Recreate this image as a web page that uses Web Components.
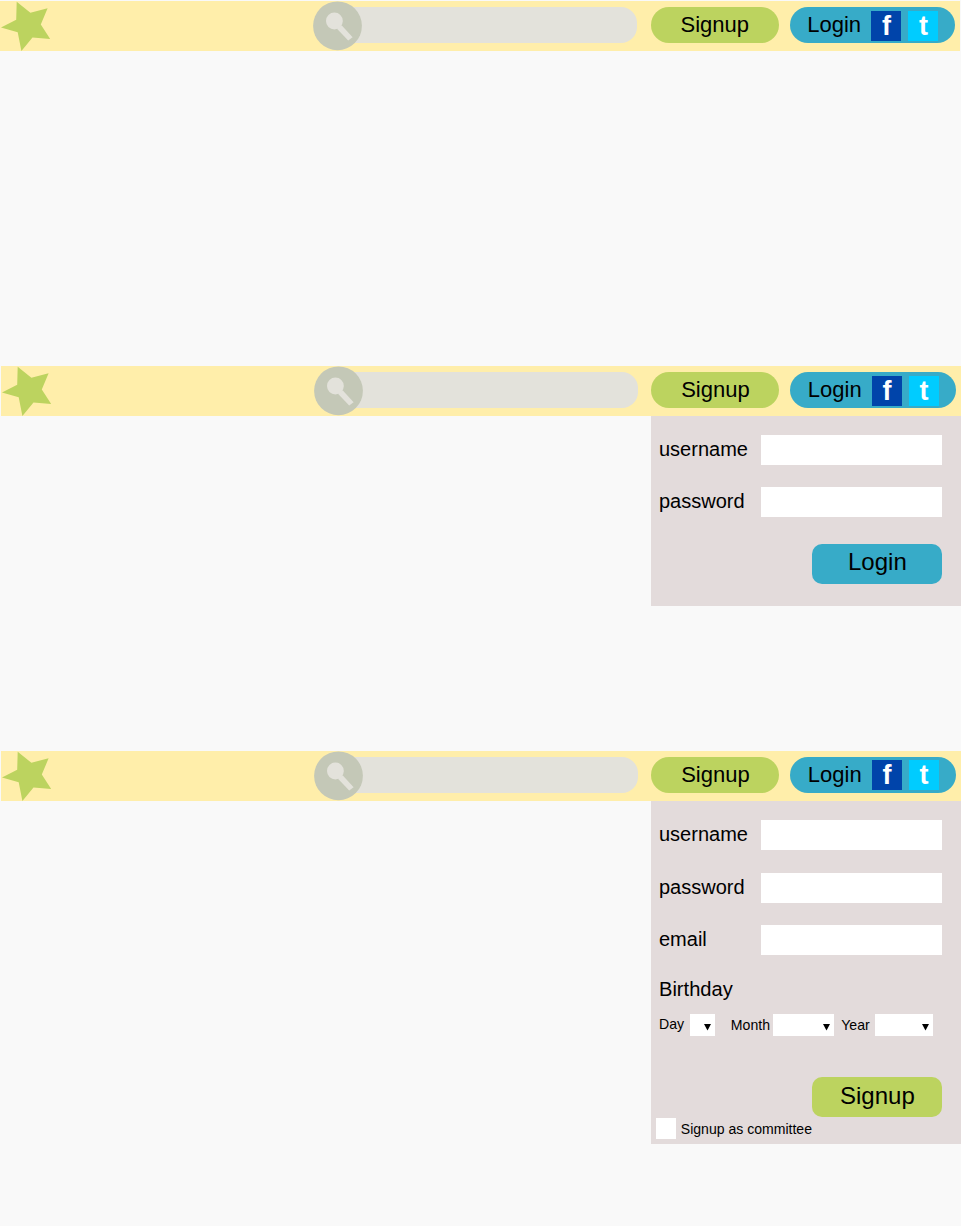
<!DOCTYPE html>
<html lang="en">
<head>
<meta charset="utf-8">
<title>Signup and login</title>
<style>
html,body{margin:0;background:#f9f9f9}
body{width:961px;height:1226px;overflow:hidden;font-family:"Liberation Sans",Arial,sans-serif;color:#000}
</style>
</head>
<body>
<auth-board></auth-board>
<script>
const define = (name, html) => {
  const t = document.createElement('template');
  t.innerHTML = html;
  customElements.define(name, class extends HTMLElement {
    constructor() {
      super();
      this.attachShadow({mode: 'open'}).append(t.content.cloneNode(true));
    }
  });
};

define('star-logo', `<style>:host{display:block;width:51px;height:50px}svg{display:block}</style>
<svg width="51" height="50" viewBox="0 0 51 50"><path fill="#bcd35f" d="M16.7 .8 30.4 11.8 47.6 7.3 40.8 23.6 50.2 38 32.5 36.6 21.4 50 17.7 31.3 1 26.5 16.2 18.7Z"/></svg>`);

define('search-box', `<style>
:host{display:flex;align-items:center;width:324px;height:50px}
svg{display:block;flex:none;position:relative}
.field{flex:1;height:36px;margin:-2px 0 0 -25px;background:#e3e2db;border-radius:0 16px 16px 0}
</style>
<svg width="49" height="50" viewBox="0 0 49 50" style="z-index:1"><circle cx="24.5" cy="24.8" r="24.4" fill="#c4c8b7"/><circle cx="21.4" cy="20" r="8.4" fill="#e3e2db"/><path fill="#e3e2db" d="M24 27.8 28.6 24.2 39.6 36.2 35.2 39.4Z"/></svg>
<div class="field"></div>`);

define('nav-pill', `<style>
:host{display:flex;box-sizing:border-box;height:36px;margin-top:-2px;border-radius:18px;font-size:22px;line-height:35px;white-space:nowrap}
</style><slot></slot>`);

define('social-badge', `<style>
:host{display:block;width:30px;height:30px;margin-top:3.5px;color:#fff;font-size:27px;font-weight:bold;line-height:31px;text-align:center}
</style><slot></slot>`);

define('top-bar', `<style>
:host{display:flex;align-items:center;width:960px;height:50px;background:#fea}
search-box{margin-left:262px}
.signup{width:128px;margin-left:13.8px;justify-content:center;background:#bcd35f}
.login{width:165.4px;margin-left:11px;padding-left:17.4px;background:#37abc8}
.f{margin-left:10.4px;background:#04a}
.t{margin-left:7px;background:#0cf}
</style>
<star-logo></star-logo><search-box></search-box>
<nav-pill class="signup">Signup</nav-pill>
<nav-pill class="login">Login<social-badge class="f">f</social-badge><social-badge class="t">t</social-badge></nav-pill>`);

define('form-row', `<style>
:host{display:flex;height:30px;margin-bottom:22.3px;font-size:20px;line-height:28px}
.label{width:102.4px}
.input{width:180.4px;height:30px;background:#fff}
</style><div class="label"><slot></slot></div><div class="input"></div>`);

define('submit-button', `<style>
:host{display:block;width:130.2px;height:40px;border-radius:10px;font-size:24px;line-height:37px;text-align:center}
</style><slot></slot>`);

define('date-select', `<style>
:host{display:flex;font-size:14.1px;line-height:22px;height:21.6px}
.box{box-sizing:border-box;width:var(--box);background:#fff;display:flex;justify-content:flex-end;padding:10.4px 3.4px 0 0}
.label{width:var(--label);margin-top:var(--drop,0px);white-space:nowrap}
svg{display:block}
</style><div class="label"><slot></slot></div><div class="box"><svg width="7" height="7" viewBox="0 0 7 7"><path d="M0 0H7L3.5 6.5Z"/></svg></div>`);

define('drop-panel', `<style>
:host{display:block;box-sizing:border-box;width:310.2px;margin-left:650.5px;padding:19px 0 0 8.5px;background:#e3dbdb}
</style><slot></slot>`);

define('login-panel', `<style>
:host{display:block}
drop-panel{height:190px}
submit-button{margin:26.4px 0 0 153.3px;line-height:36px;background:#37abc8}
.last{margin-bottom:0}
</style>
<drop-panel><form-row>username</form-row><form-row class="last">password</form-row><submit-button>Login</submit-button></drop-panel>`);

define('signup-panel', `<style>
:host{display:block}
drop-panel{height:343px;padding-top:19.6px}
h2{margin:0;font-size:20.1px;font-weight:normal;line-height:24px}
.dates{display:flex;margin-top:12.7px}
submit-button{margin:41.6px 0 0 153.3px;background:#bcd35f}
.check{display:flex;margin:.8px 0 0 -3.4px;font-size:14.05px;line-height:22px}
.box{width:20.4px;height:21px;margin-right:4.8px;background:#fff}
</style>
<drop-panel>
<form-row>username</form-row><form-row>password</form-row><form-row>email</form-row>
<h2>Birthday</h2>
<div class="dates">
<date-select style="--label:31px;--box:24.5px;--drop:-1px">Day</date-select>
<date-select style="--label:42px;--box:61px;margin-left:16.3px">Month</date-select>
<date-select style="--label:33.4px;--box:58px;margin-left:7.4px">Year</date-select>
</div>
<submit-button>Signup</submit-button>
<div class="check"><div class="box"></div><span>Signup as committee</span></div>
</drop-panel>`);

define('auth-board', `<style>
:host{display:grid;grid-template-rows:365.2px 384.6px auto;padding-top:1px;width:961px;box-sizing:border-box}
.shift{margin-left:.6px}
</style>
<section><top-bar></top-bar></section>
<section><top-bar class="shift"></top-bar><login-panel></login-panel></section>
<section><top-bar class="shift"></top-bar><signup-panel></signup-panel></section>`);
</script>
</body>
</html>
